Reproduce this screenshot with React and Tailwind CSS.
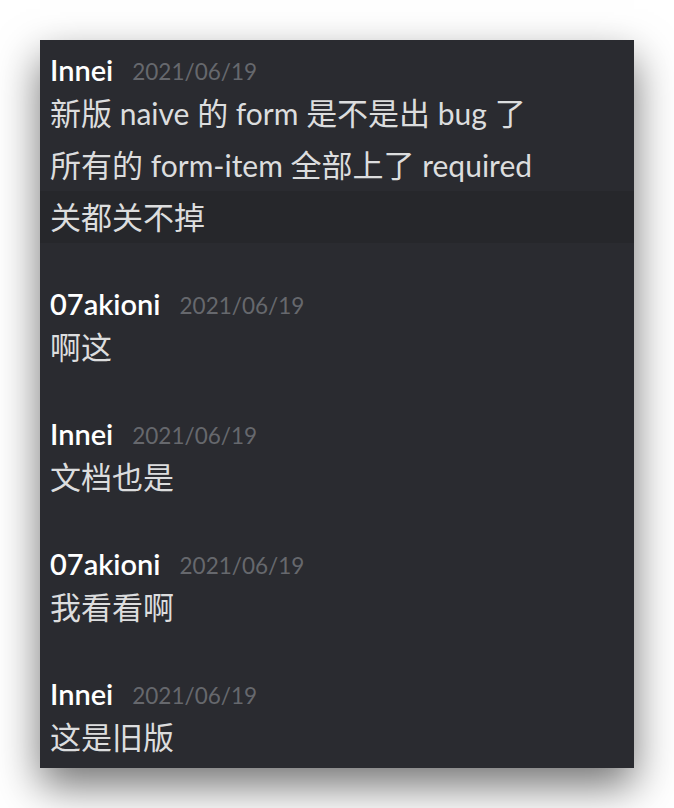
import React from 'react';

const groups = [
  {
    author: 'Innei',
    date: '2021/06/19',
    lines: ['新版 naive 的 form 是不是出 bug 了', '所有的 form-item 全部上了 required', '关都关不掉'],
    hover: 2,
  },
  { author: '07akioni', date: '2021/06/19', lines: ['啊这'] },
  { author: 'Innei', date: '2021/06/19', lines: ['文档也是'] },
  { author: '07akioni', date: '2021/06/19', lines: ['我看看啊'] },
  { author: 'Innei', date: '2021/06/19', lines: ['这是旧版'] },
];

const font = { fontFamily: '"Lato", "Noto Sans CJK SC", sans-serif' };

// CJK glyphs sit a bit larger than the latin text in the original client
const Runs = ({ text }) =>
  text.split(/([\u4e00-\u9fff]+)/).map((part, k) =>
    /[\u4e00-\u9fff]/.test(part) ? (
      <span key={k} className="text-[31px]">{part}</span>
    ) : (
      <span key={k}>{part}</span>
    )
  );

const App = () => {
  return (
    <div className="min-h-screen bg-white p-10" style={font}>
      <div className="w-[594px] h-[728px] overflow-hidden bg-[#2a2b30] shadow-[0_18px_40px_rgba(0,0,0,0.55)] pt-[13px] flex flex-col gap-[44px]">
        {groups.map((g, i) => (
          <div key={i}>
            <div className="h-[34px] flex items-center px-[10px]">
              <span className="text-[29px] font-semibold text-white">{g.author}</span>
              <span className="ml-[19px] text-[22.5px] text-[#66686d] mt-[3px]">{g.date}</span>
            </div>
            {g.lines.map((line, j) => (
              <div
                key={j}
                className={`h-[52px] flex items-center px-[10px] text-[30px] leading-none text-[#dcddde] ${g.hover === j ? 'bg-[#26272b]' : ''}`}
              >
                <div><Runs text={line} /></div>
              </div>
            ))}
          </div>
        ))}
      </div>
    </div>
  );
};

export default App;
